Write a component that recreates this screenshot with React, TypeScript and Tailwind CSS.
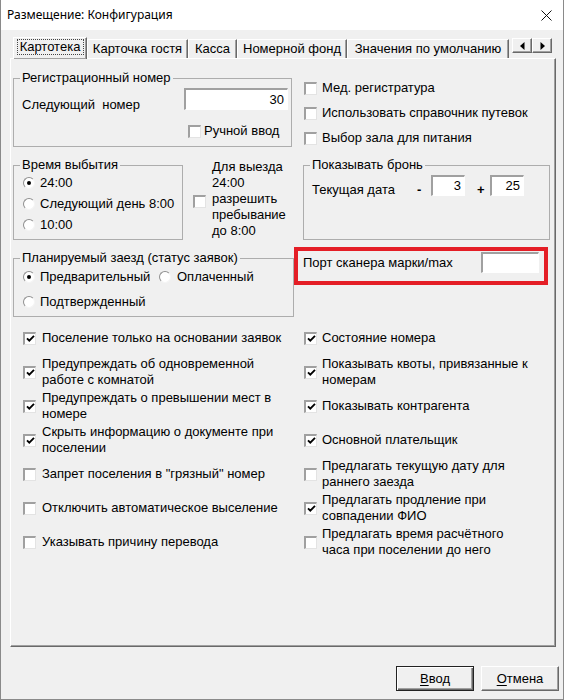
import type { ReactNode } from 'react';

// classic 3D bevels used by the dialog controls
const sunken =
  'border-t-2 border-l-2 border-r border-b border-t-[#a0a0a0] border-l-[#a0a0a0] border-r-white border-b-white bg-white';
const raised =
  'border border-t-white border-l-white border-r-[#696969] border-b-[#696969] shadow-[inset_-1px_-1px_0_#a0a0a0]';

function Check({ on = false }: { on?: boolean }) {
  return (
    <span className="flex h-[13px] w-[13px] shrink-0 items-center justify-center border-t-2 border-l-2 border-r border-b border-t-[#a0a0a0] border-l-[#a0a0a0] border-r-[#e3e3e3] border-b-[#e3e3e3] bg-white">
      {on && (
        <svg width="9" height="9" viewBox="0 0 9 9">
          <path d="M1 4.3 L3.3 6.6 L8 1.9" fill="none" stroke="#000" strokeWidth="1.9" />
        </svg>
      )}
    </span>
  );
}

function Radio({ on = false }: { on?: boolean }) {
  return (
    <span className="flex h-[12px] w-[12px] shrink-0 items-center justify-center rounded-full border border-t-[#8f8f8f] border-l-[#8f8f8f] border-r-[#f4f4f4] border-b-[#f4f4f4] bg-white">
      {on && <span className="h-[4px] w-[4px] rounded-full bg-black" />}
    </span>
  );
}

function Field({ value = '', className = '' }: { value?: string; className?: string }) {
  return <div className={`flex items-center justify-end pr-[3px] ${sunken} ${className}`}>{value}</div>;
}

function Group({ title, className = '', children }: { title: string; className?: string; children: ReactNode }) {
  return (
    <fieldset className={`border border-[#adadad] ${className}`}>
      <legend className="ml-[6px] px-[2px] leading-[16px]">{title}</legend>
      {children}
    </fieldset>
  );
}

const options: { left: [ReactNode, boolean]; right: [ReactNode, boolean] }[] = [
  { left: ['Поселение только на основании заявок', true], right: ['Состояние номера', true] },
  {
    left: [<>Предупреждать об одновременной<br />работе с комнатой</>, true],
    right: [<>Показывать квоты, привязанные к<br />номерам</>, true],
  },
  {
    left: [<>Предупреждать о превышении мест в<br />номере</>, true],
    right: ['Показывать контрагента', true],
  },
  {
    left: [<>Скрыть информацию о документе при<br />поселении</>, true],
    right: ['Основной плательщик', true],
  },
  {
    left: ['Запрет поселения в "грязный" номер', false],
    right: [<>Предлагать текущую дату для<br />раннего заезда</>, false],
  },
  {
    left: ['Отключить автоматическое выселение', false],
    right: [<>Предлагать продление при<br />совпадении ФИО</>, true],
  },
  {
    left: ['Указывать причину перевода', false],
    right: [<>Предлагать время расчётного<br />часа при поселении до него</>, false],
  },
];

const tabs = [
  { label: 'Карточка гостя', w: 'w-[101px]' },
  { label: 'Касса', w: 'w-[49px]' },
  { label: 'Номерной фонд', w: 'w-[110px]' },
  { label: 'Значения по умолчанию', w: 'w-[162px]' },
];

export default function App() {
  return (
    <div className="flex h-[700px] w-[564px] flex-col border-x border-b border-[#8a8a8a] bg-[#f0f0f0] font-['Liberation_Sans',Arial,sans-serif] text-[13px] leading-[16px] text-black">
      {/* title bar */}
      <div className="flex h-[30px] shrink-0 items-center justify-between bg-white pl-[6px] pr-[11px]">
        <span className="font-['Noto_Sans',sans-serif] text-[12px]">Размещение: Конфигурация</span>
        <svg width="11" height="11" viewBox="0 0 11 11">
          <path d="M0.5 0.5 L10.5 10.5 M10.5 0.5 L0.5 10.5" stroke="#111" strokeWidth="1" />
        </svg>
      </div>

      {/* tab strip */}
      <div className="mt-[7px] flex h-[21px] items-end pl-[12px]">
        <div className={`relative z-10 -mb-px flex h-[22px] w-[74px] justify-center bg-[#f0f0f0] pt-px ${raised} border-b-0`}>
          <span className="h-[16px] w-[67px] border border-dotted border-[#444] text-center leading-[14px]">Картотека</span>
        </div>
        {tabs.map((t) => (
          <div
            key={t.label}
            className={`h-[19px] ${t.w} whitespace-nowrap border-t border-l border-r border-t-white border-l-white border-r-[#696969] text-center leading-[17px] shadow-[inset_-1px_0_0_#a0a0a0]`}
          >
            {t.label}
          </div>
        ))}
        <div className="mb-[5px] ml-[3px] flex self-end">
          <div className={`flex h-[15px] w-[20px] items-center justify-center ${raised}`}>
            <svg width="5" height="8" viewBox="0 0 5 8">
              <path d="M4.5 0 L0 4 L4.5 8 Z" fill="#000" />
            </svg>
          </div>
          <div className={`flex h-[15px] w-[20px] items-center justify-center ${raised}`}>
            <svg width="5" height="8" viewBox="0 0 5 8">
              <path d="M0.5 0 L5 4 L0.5 8 Z" fill="#000" />
            </svg>
          </div>
        </div>
      </div>

      {/* tab page */}
      <div className="ml-[9px] h-[589px] w-[546px] shrink-0 border-t border-l border-r border-b border-t-white border-l-white border-r-[#696969] border-b-[#696969] pl-[2px] shadow-[inset_-1px_-1px_0_#a0a0a0]">
        <div className="flex h-[258px]">
          {/* left column */}
          <div className="w-[281px] shrink-0">
            <Group title="Регистрационный номер" className="mt-[11px] w-[279px] pb-[7px]">
              <div className="mt-[2px] flex items-start">
                <span className="pl-[8px] pt-[9px]">Следующий&nbsp;&nbsp;номер</span>
                <Field value="30" className="ml-auto mr-[3px] h-[22px] w-[104px]" />
              </div>
              <div className="mt-[10px] flex h-[16px] items-center gap-[3px] pl-[174px]">
                <Check />
                <span>Ручной ввод</span>
              </div>
            </Group>

            <div className="mt-[10px] flex items-start">
              <Group title="Время выбытия" className="w-[170px] pb-[6px]">
                <div className="mt-[2px] flex h-[16px] items-center gap-[5px] pl-[9px]">
                  <Radio on />
                  <span>24:00</span>
                </div>
                <div className="mt-[5px] flex h-[16px] items-center gap-[5px] pl-[9px]">
                  <Radio />
                  <span>Следующий день 8:00</span>
                </div>
                <div className="mt-[5px] flex h-[16px] items-center gap-[5px] pl-[9px]">
                  <Radio />
                  <span>10:00</span>
                </div>
              </Group>
              <div className="ml-[10px] mt-[2px] flex items-center gap-[6px]">
                <span className="mt-[4px]">
                  <Check />
                </span>
                <span>
                  Для выезда
                  <br />
                  24:00
                  <br />
                  разрешить
                  <br />
                  пребывание
                  <br />
                  до 8:00
                </span>
              </div>
            </div>

            <Group title="Планируемый заезд (статус заявок)" className="mt-[10px] w-[281px] pb-[6px]">
              <div className="mt-[3px] flex h-[16px] items-center pl-[9px]">
                <div className="flex w-[136px] items-center gap-[5px]">
                  <Radio on />
                  <span>Предварительный</span>
                </div>
                <div className="flex items-center gap-[6px]">
                  <Radio />
                  <span>Оплаченный</span>
                </div>
              </div>
              <div className="mt-[9px] flex h-[16px] items-center gap-[5px] pl-[9px]">
                <Radio />
                <span>Подтвержденный</span>
              </div>
            </Group>
          </div>

          {/* right column */}
          <div className="flex-1">
            <div className="mt-[21px] flex flex-col gap-[9px] pl-[10px]">
              {['Мед. регистратура', 'Использовать справочник путевок', 'Выбор зала для питания'].map((s) => (
                <div key={s} className="flex h-[16px] items-center gap-[5px]">
                  <Check />
                  <span>{s}</span>
                </div>
              ))}
            </div>

            <Group title="Показывать бронь" className="ml-[9px] mt-[11px] w-[247px] pb-[41px]">
              <div className="mt-[2px] flex items-start pl-[8px]">
                <span className="w-[105px] pt-[7px]">Текущая дата</span>
                <span className="w-[14px] pt-[7px] font-bold">-</span>
                <Field value="3" className="h-[21px] w-[34px]" />
                <span className="w-[25px] pl-[12px] pt-[7px] font-bold">+</span>
                <Field value="25" className="h-[21px] w-[34px]" />
              </div>
            </Group>

            <div className="mt-[7px] flex w-[254px] items-start border-[4px] border-[#e41e26] px-[5px] pb-[8px] pt-px">
              <span className="pt-[3px]">Порт сканера марки/max</span>
              <Field className="ml-auto h-[21px] w-[58px]" />
            </div>
          </div>
        </div>

        {/* option checkboxes */}
        <div className="mt-[4px] grid grid-cols-[281px_1fr]">
          {options.map((row, i) => (
            <div key={i} className="contents">
              <div className="flex h-[34px] items-center gap-[6px] pl-[10px]">
                <Check on={row.left[1]} />
                <span>{row.left[0]}</span>
              </div>
              <div className="flex h-[34px] items-center gap-[5px] pl-[10px]">
                <Check on={row.right[1]} />
                <span>{row.right[0]}</span>
              </div>
            </div>
          ))}
        </div>
      </div>

      {/* dialog buttons */}
      <div className="mt-[19px] flex justify-end gap-[7px] pr-[4px]">
        <button className="h-[25px] w-[78px] border border-[#222] shadow-[inset_1px_1px_0_#fff,inset_-1px_-1px_0_#696969,inset_-2px_-2px_0_#a0a0a0]">
          <span className="underline underline-offset-[2px]">В</span>вод
        </button>
        <button className={`h-[25px] w-[78px] ${raised}`}>
          <span className="underline underline-offset-[2px]">О</span>тмена
        </button>
      </div>
    </div>
  );
}
